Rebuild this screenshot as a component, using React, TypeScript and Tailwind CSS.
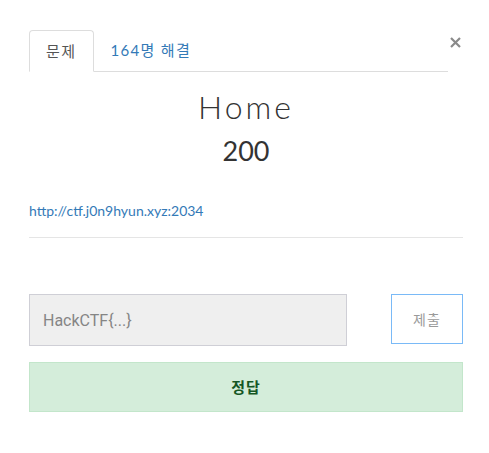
export default function App() {
  return (
    <div className="w-[489px] h-[453px] bg-white pt-[30px] pl-[29px] pr-[26px] font-['Lato','Noto_Sans_CJK_KR',sans-serif] text-[#333]">
      <div className="flex items-start">
        <div className="flex flex-1 border-b border-[#dddddd]">
          <div className="h-[42px] -mb-px px-[16px] flex items-center border border-[#dddddd] border-b-white rounded-t-[4px] bg-white text-[15px] tracking-[1.5px] text-[#555]">
            문제
          </div>
          <div className="h-[41px] px-[17px] flex items-center text-[15px] tracking-[1.3px] text-[#337ab7]">
            164명 해결
          </div>
        </div>
        <button className="w-[15px] h-[41px] flex justify-center pt-[7px]">
          <svg width="11" height="11" viewBox="0 0 11 11">
            <path d="M1 1L10 10M10 1L1 10" stroke="#8a8a8a" strokeWidth="2.2" />
          </svg>
        </button>
      </div>

      <div className="mt-[15px] text-center text-[32px] leading-[40px] font-light tracking-[3px] text-[#333]">
        Home
      </div>
      <div className="mt-[8px] text-center text-[27px] leading-[32px] text-[#333]">200</div>

      <div className="mt-[35px] text-[14px] leading-[18px]">
        <a className="text-[#337ab7]" href="#">
          http://ctf.j0n9hyun.xyz:2034
        </a>
      </div>
      <div className="mt-[17px] border-t border-[#e5e5e5]" />

      <div className="mt-[56px] flex items-start">
        <input
          className="w-[318px] h-[52px] px-[13px] bg-[#efefef] border border-[#cfcfd6] text-[16px] font-['Roboto',sans-serif] placeholder:text-[#858585] outline-none"
          placeholder="HackCTF{...}"
        />
        <button className="ml-auto w-[72px] h-[50px] border border-[#7abaf7] bg-white text-[14px] tracking-[1px] text-[#9a9a9a]">
          제출
        </button>
      </div>

      <div className="mt-[16px] h-[50px] flex items-center justify-center bg-[#d4edda] border border-[#c3e6cb] text-[15px] font-bold tracking-[1px] text-[#155724]">
        정답
      </div>
    </div>
  );
}
